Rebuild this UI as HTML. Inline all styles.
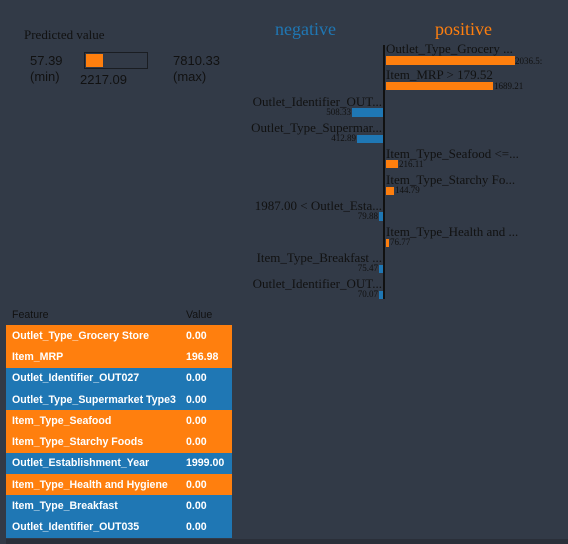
<!DOCTYPE html>
<html><head><meta charset="utf-8"><style>
body{margin:0;width:568px;height:544px;background:#323a47;position:relative;overflow:hidden;font-family:"Liberation Sans",sans-serif;color:#111}
.a{position:absolute;white-space:nowrap}
.s{font-family:"Liberation Serif",serif;font-size:13px;color:#111}
.r{text-align:right}
.v{font-family:"Liberation Serif",serif;font-size:9px;color:#111}
.o{background:#ff7f0e}.b{background:#1f77b4}
table{position:absolute;left:6px;top:325px;width:226px;border-collapse:collapse;font-size:10.6px;font-weight:bold;color:#fff;table-layout:fixed}
td{height:21.3px;padding:0 0 0 6px;white-space:nowrap;overflow:hidden}
td:nth-child(1){width:168px}
</style></head><body>
<div class="a s" style="left:24px;top:27px">Predicted value</div>
<div class="a" style="left:30px;top:53px;font-size:13px;line-height:16px">57.39<br>(min)</div>
<div class="a" style="left:84px;top:52px;width:62px;height:15px;border:1px solid #1a1d22"></div>
<div class="a o" style="left:86px;top:54px;width:17px;height:13px"></div>
<div class="a" style="left:80px;top:72px;font-size:13px">2217.09</div>
<div class="a" style="left:173px;top:53px;font-size:13px;line-height:16px">7810.33<br>(max)</div>

<div class="a" style="left:275px;top:19px;font-family:'Liberation Serif',serif;font-size:18px;color:#1f77b4">negative</div>
<div class="a" style="left:435px;top:19px;font-family:'Liberation Serif',serif;font-size:18px;color:#ff7f0e">positive</div>
<div class="a" style="left:383px;top:45px;width:2px;height:254px;background:#111"></div>

<div class="a s" style="left:386px;top:41px">Outlet_Type_Grocery ...</div>
<div class="a o" style="left:386px;top:56px;width:129px;height:9px"></div>
<div class="a v" style="left:515px;top:56px">2036.5:</div>

<div class="a s" style="left:386px;top:67px">Item_MRP &gt; 179.52</div>
<div class="a o" style="left:386px;top:82px;width:107px;height:8px"></div>
<div class="a v" style="left:494px;top:81px">1689.21</div>

<div class="a s r" style="right:186px;top:94px">Outlet_Identifier_OUT...</div>
<div class="a b" style="left:352px;top:108px;width:31px;height:9px"></div>
<div class="a v r" style="right:217px;top:107px">508.33</div>

<div class="a s r" style="right:186px;top:120px">Outlet_Type_Supermar...</div>
<div class="a b" style="left:357px;top:135px;width:26px;height:8px"></div>
<div class="a v r" style="right:212px;top:133px">412.89</div>

<div class="a s" style="left:386px;top:146px">Item_Type_Seafood &lt;=...</div>
<div class="a o" style="left:386px;top:160px;width:12px;height:8px"></div>
<div class="a v" style="left:399px;top:159px">216.11</div>

<div class="a s" style="left:386px;top:172px">Item_Type_Starchy Fo...</div>
<div class="a o" style="left:386px;top:187px;width:8px;height:8px"></div>
<div class="a v" style="left:395px;top:185px">144.79</div>

<div class="a s r" style="right:186px;top:198px">1987.00 &lt; Outlet_Esta...</div>
<div class="a b" style="left:379px;top:212px;width:4px;height:9px"></div>
<div class="a v r" style="right:190px;top:211px">79.88</div>

<div class="a s" style="left:386px;top:224px">Item_Type_Health and ...</div>
<div class="a o" style="left:386px;top:239px;width:3px;height:8px"></div>
<div class="a v" style="left:390px;top:237px">76.77</div>

<div class="a s r" style="right:186px;top:250px">Item_Type_Breakfast ...</div>
<div class="a b" style="left:379px;top:265px;width:4px;height:8px"></div>
<div class="a v r" style="right:190px;top:263px">75.47</div>

<div class="a s r" style="right:186px;top:276px">Outlet_Identifier_OUT...</div>
<div class="a b" style="left:379px;top:291px;width:4px;height:8px"></div>
<div class="a v r" style="right:190px;top:289px">70.07</div>

<div class="a" style="left:12px;top:309px;font-size:10.6px">Feature</div>
<div class="a" style="left:186px;top:309px;font-size:10.6px">Value</div>
<table>
<tr class="o"><td>Outlet_Type_Grocery Store</td><td>0.00</td></tr>
<tr class="o"><td>Item_MRP</td><td>196.98</td></tr>
<tr class="b"><td>Outlet_Identifier_OUT027</td><td>0.00</td></tr>
<tr class="b"><td>Outlet_Type_Supermarket Type3</td><td>0.00</td></tr>
<tr class="o"><td>Item_Type_Seafood</td><td>0.00</td></tr>
<tr class="o"><td>Item_Type_Starchy Foods</td><td>0.00</td></tr>
<tr class="b"><td>Outlet_Establishment_Year</td><td>1999.00</td></tr>
<tr class="o"><td>Item_Type_Health and Hygiene</td><td>0.00</td></tr>
<tr class="b"><td>Item_Type_Breakfast</td><td>0.00</td></tr>
<tr class="b"><td>Outlet_Identifier_OUT035</td><td>0.00</td></tr>
</table>
<div class="a" style="left:6px;top:539px;width:562px;height:5px;background:#2a2f39"></div>
</body></html>
